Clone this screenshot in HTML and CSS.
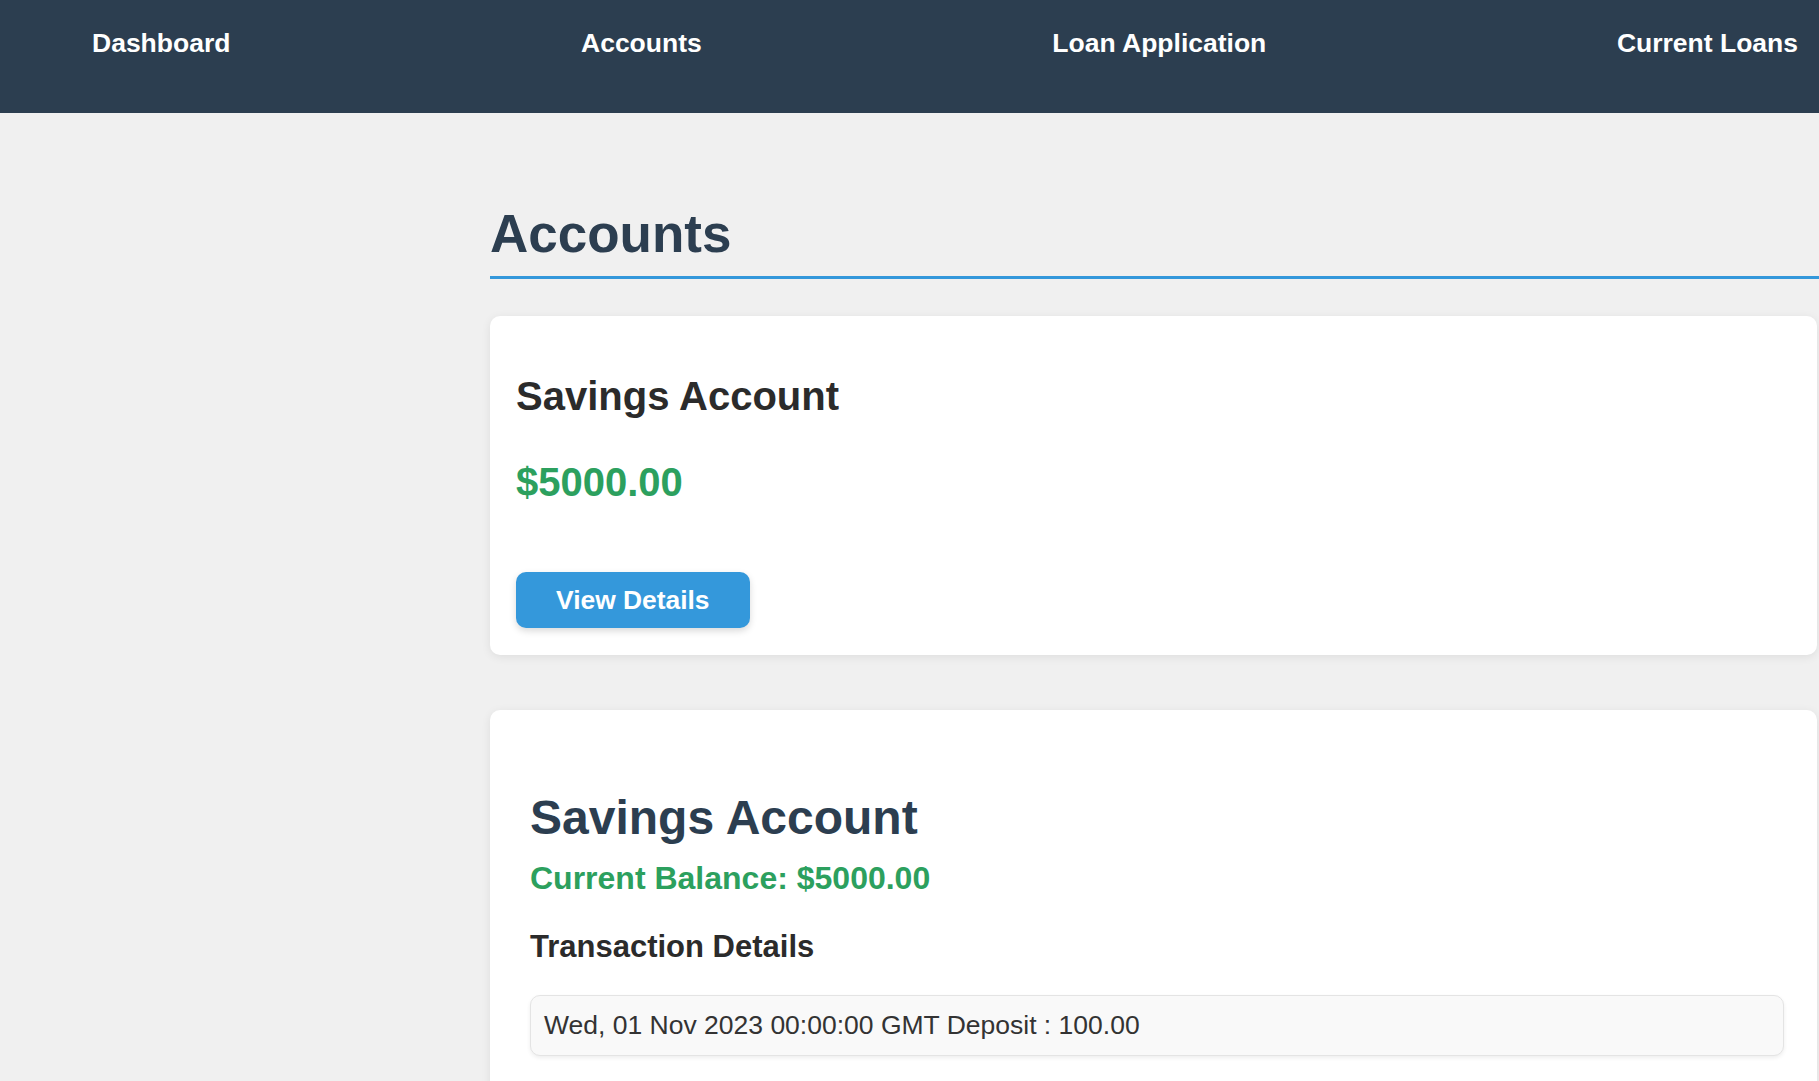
FILE: index.html
```html
<!DOCTYPE html>
<html lang="en">
<head>
<meta charset="utf-8">
<title>Accounts</title>
<link rel="stylesheet" href="styles.css">
</head>
<body>
<nav class="topnav">
  <a class="nav-link" href="#">Dashboard</a>
  <a class="nav-link" href="#">Accounts</a>
  <a class="nav-link" href="#">Loan Application</a>
  <a class="nav-link" href="#">Current Loans</a>
</nav>
<main class="main">
  <h1 class="page-title">Accounts</h1>
  <section class="account-card">
    <h2 class="account-name">Savings Account</h2>
    <p class="account-balance">$5000.00</p>
    <button class="btn-details" type="button">View Details</button>
  </section>
  <section class="details-card">
    <h2 class="details-name">Savings Account</h2>
    <p class="details-balance">Current Balance: $5000.00</p>
    <h3 class="details-heading">Transaction Details</h3>
    <ul class="tx-list">
      <li class="tx-item">Wed, 01 Nov 2023 00:00:00 GMT Deposit : 100.00</li>
    </ul>
  </section>
</main>
</body>
</html>
```
FILE: styles.css
```css
html, body {
  margin: 0;
  padding: 0;
}
body {
  background: #f0f0f0;
  font-family: "Liberation Sans", Arial, sans-serif;
  color: #333;
  overflow: hidden;
}
.topnav {
  box-sizing: border-box;
  height: 113px;
  background: #2c3e50;
  display: flex;
  justify-content: space-between;
  align-items: flex-start;
  padding: 28px 21px 0 92px;
}
.nav-link {
  color: #fff;
  text-decoration: none;
  font-weight: bold;
  font-size: 26.5px;
  line-height: 30px;
}
.main {
  padding-left: 490px;
  width: 1327px;
}
.page-title {
  margin: 90px -4px 0 0;
  font-size: 53px;
  line-height: 61px;
  font-weight: bold;
  color: #2c3e50;
  padding-bottom: 12px;
  border-bottom: 3px solid #3498db;
}
.account-card {
  margin-top: 37px;
  background: #fff;
  border-radius: 10px;
  box-shadow: 0 2px 10px rgba(0, 0, 0, 0.08);
  padding: 57px 26px 27px 26px;
}
.account-name {
  margin: 0;
  font-size: 40px;
  line-height: 46px;
  font-weight: bold;
  color: #2b2b2b;
}
.account-balance {
  margin: 40px 0 0 0;
  font-size: 40px;
  line-height: 46px;
  font-weight: bold;
  color: #2ca05e;
}
.btn-details {
  margin-top: 67px;
  display: block;
  background: #3498db;
  color: #fff;
  border: none;
  border-radius: 10px;
  font-family: "Liberation Sans", Arial, sans-serif;
  font-weight: bold;
  font-size: 26.4px;
  line-height: 30px;
  padding: 13px 40px;
  box-shadow: 0 3px 7px rgba(0, 0, 0, 0.15);
  cursor: pointer;
}
.details-card {
  margin-top: 55px;
  background: #fff;
  border-radius: 10px;
  box-shadow: 0 2px 10px rgba(0, 0, 0, 0.08);
  padding: 80px 33px 40px 40px;
}
.details-name {
  margin: 0;
  font-size: 48px;
  line-height: 55px;
  font-weight: bold;
  color: #2c3e50;
}
.details-balance {
  margin: 15px 0 0 0;
  font-size: 32px;
  line-height: 37px;
  font-weight: bold;
  color: #2ca05e;
}
.details-heading {
  margin: 32px 0 0 0;
  font-size: 31px;
  line-height: 36px;
  font-weight: bold;
  color: #2b2b2b;
}
.tx-list {
  list-style: none;
  margin: 30px 0 0 0;
  padding: 0;
}
.tx-item {
  background: #f9f9f9;
  border: 1px solid #e4e4e4;
  border-radius: 10px;
  box-shadow: 0 2px 4px rgba(0, 0, 0, 0.07);
  padding: 14px 14px 15px 13px;
  font-size: 26.5px;
  line-height: 30px;
  color: #333;
}
```
